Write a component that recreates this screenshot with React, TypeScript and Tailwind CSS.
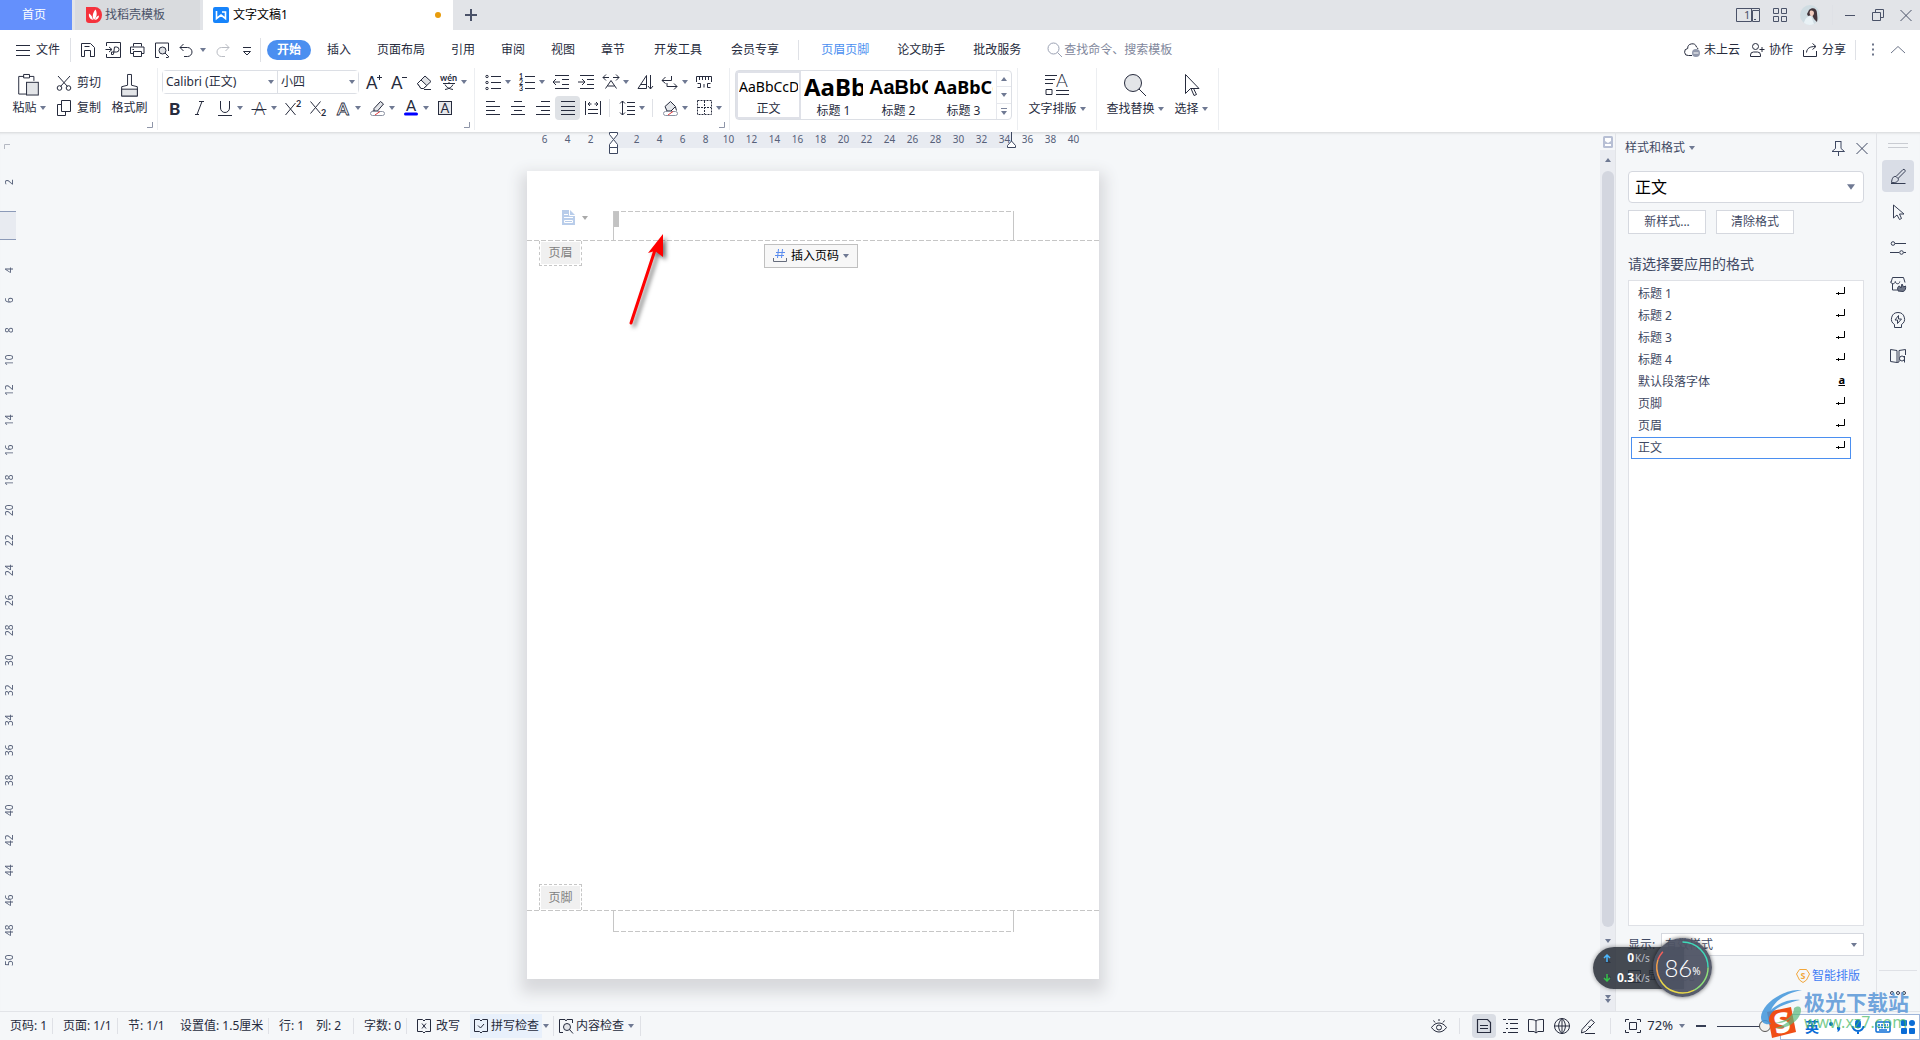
import { useState, type ReactNode } from 'react';
import clsx from 'clsx';

/* ---------- icons ---------- */

const ICONS: Record<string, ReactNode> = {
  save: <path d="M1.5 14.5v-13h9l4 4v9h-4.5M1.5 14.5h3M4.5 14.5v-6h6v6M4.5 4.5h5" />,
  pdf: <path d="M1.5 4V.5h14v15h-14V12M.5 7.5h6M4 5l3 2.5L4 10M8.5 12l1-7h2a2 2 0 010 5H6.5v2.5h2" />,
  print: <path d="M4.5 4.5v-3h8v3M4 11.5H1.5v-6.5h13.5v6.5H12.5M4.5 9.5h8v5h-8zM3.5 7.5h1.5" />,
  preview: (
    <>
      <path d="M5 15.5H1.5v-14.5h13v8M12 15.5h2.5" />
      <circle cx="8.5" cy="8.5" r="3.5" fill="#dfe1e5" />
      <path d="M11 11l4 4" />
    </>
  ),
  undo: <path d="M5.5 2l-3.5 3.5 3.5 3.5M2 5.5h7.5a4.5 4.5 0 010 9H6" />,
  redo: <path d="M10.5 2L14 5.5 10.5 9M14 5.5H6.5a4.5 4.5 0 000 9H10" />,
  more: <path d="M4 5.5h8M4.5 9.5h7L8 13z" />,
  menu: <path d="M1 3.5h14M1 8.5h14M1 13.5h14" />,
  search: <path d="M6.5 1a5.5 5.5 0 100 11 5.5 5.5 0 000-11zM10.5 10.5L15 15" />,
  cloud: (
    <>
      <path d="M8 13.5H4.5a3.5 3.5 0 01-.8-7A4.5 4.5 0 0112.500 5a4 4 0 011.500 2" />
      <circle cx="12" cy="11" r="4" fill="#9299ac" stroke="none" />
      <path d="M9.5 11h5" stroke="#fff" />
    </>
  ),
  collab: <path d="M6.5 1.5a3 3 0 100 6 3 3 0 000-6zM1.5 14.5v-1.5a3 3 0 013-3h4a3 3 0 013 3v1.5zM10.5 7.5h5M13 5v5" />,
  share: <path d="M1.5 8v6.5h13V9M4.5 10.5C5 6 8 4.5 13.5 4.5M10.5 1.5l3.5 3-3.5 3" />,
  dots: <path d="M7 2.500h2M7 7.500h2M7 12.500h2" strokeWidth="2" />,
  up: <path d="M1 11l7-6.5 7 6.5" />,
  cut: (
    <>
      <path d="M2 1l9.5 10.5M14 1L4.5 11.5" />
      <circle cx="3.5" cy="13" r="2.3" />
      <circle cx="12.5" cy="13" r="2.3" />
    </>
  ),
  copy: <path d="M5.5.5h9v11h-9zM5 4.5H1.5v11h8v-3.5" />,
  grow: (
    <>
      <text x="0" y="15" fontSize="17" fill="currentColor" stroke="none">A</text>
      <path d="M11 3.5h5M13.5 1v5" />
    </>
  ),
  shrink: (
    <>
      <text x="0" y="15" fontSize="17" fill="currentColor" stroke="none">A</text>
      <path d="M11 3.5h5" />
    </>
  ),
  eraser: (
    <>
      <path d="M1.5 9.5l7.5-7.5 6 5.5-7.5 7H5z" fill="#dfe1e5" />
      <path d="M1.5 9.5L5 6l5.8 5.5-3.3 3H5z" fill="#fff" />
      <path d="M8 15.5h7" />
    </>
  ),
  pinyin: (
    <>
      <text x="-1" y="7" fontSize="9" fontWeight="700" fill="currentColor" stroke="none">wén</text>
      <path d="M2 9.500h12M8 8v1.500M4 10.500c1 2.500 4 4.500 8 5M12 10.500c-1 2.500-4 4.500-8 5" />
    </>
  ),
  bold: <text x="2" y="14.5" fontSize="17" fontWeight="900" fill="currentColor" stroke="none">B</text>,
  italic: <path d="M7 1.5h5M3 14.5h4M10 1.5l-5 13" />,
  underline: <path d="M3.5 1v7a4.5 4.5 0 009 0V1M1 15.5h14" />,
  strike: (
    <>
      <text x="3" y="14.5" fontSize="17" fontWeight="300" fill="currentColor" stroke="none">A</text>
      <path d="M.5 9.5h15" />
    </>
  ),
  sup: (
    <>
      <path d="M.5 3l10 12M10.5 3l-10 12" />
      <text x="11" y="7" fontSize="9" fontWeight="700" fill="currentColor" stroke="none">2</text>
    </>
  ),
  sub: (
    <>
      <path d="M.5 1.5l10 12M10.5 1.5l-10 12" />
      <text x="11" y="16" fontSize="9" fontWeight="700" fill="currentColor" stroke="none">2</text>
    </>
  ),
  effect: (
    <text x="2" y="14.5" fontSize="17" fontWeight="700" fill="#fff" stroke="currentColor" strokeWidth=".8">A</text>
  ),
  highlight: (
    <>
      <path d="M5 8.5l6.5-7 3 2.5-6 7H5zM4.5 10.5l-2 1.5" fill="#e3e5e9" />
      <rect x="1.5" y="11.5" width="14" height="4" rx="2" fill="#fff" stroke="#8d93a3" />
      <path d="M6 15l5-3.5" stroke="#e33b3b" />
    </>
  ),
  fontColor: (
    <>
      <text x="3" y="11" fontSize="15" fill="currentColor" stroke="none">A</text>
      <rect x="1" y="12.5" width="14" height="3" rx="1.5" fill="#0000ff" stroke="none" />
    </>
  ),
  charBox: (
    <>
      <rect x="1.5" y="1.5" width="13" height="13" fill="#e8e9ec" />
      <text x="3.5" y="12.5" fontSize="13" fill="currentColor" stroke="none">A</text>
    </>
  ),
  bullets: (
    <>
      <path d="M6 2.5h10M6 8.5h10M6 14.5h10" />
      <circle cx="2" cy="2.5" r="1.2" />
      <circle cx="2" cy="8.5" r="1.2" />
      <circle cx="2" cy="14.5" r="1.2" />
    </>
  ),
  numbers: (
    <>
      <path d="M6 2.5h10M6 8.5h10M6 14.5h10" />
      <g fontSize="7" fontWeight="700" fill="currentColor" stroke="none">
        <text x="0" y="5">1</text>
        <text x="0" y="11">2</text>
        <text x="0" y="17">3</text>
      </g>
    </>
  ),
  outdent: <path d="M2 1.5h14M9 5.5h7M9 10.5h7M2 14.5h14M0 8h7M3 5L0 8l3 3" />,
  indent: <path d="M2 1.5h14M9 5.5h7M9 10.5h7M2 14.5h14M0 8h7M4 5l3 3-3 3" />,
  spread: <path d="M2.5 14.5L8 6.5l5.5 8M4.5 12h7M0 3.5h6M10 3.5h6M3 .5L0 3.5l3 3M13 .5l3 3-3 3" />,
  sort: <path d="M1 14.5L9.5 1.5v13zM4 10.5h5M13.5 1v14M11 12l2.500 3 2.500-3" />,
  wrap: <path d="M9.5 2v4.5H0M3.5 3L0 6.5l3.5 3M5 9v3.5h10M12 9.5l3 3-3 3" />,
  tabs: <path d="M.5 7.500V2.500h15v5M3.500 3v3M6.500 3v3M9.500 3v3M12.500 3v3M0 7.500h1M15 7.500h1M1.500 13.500h3v-4h-3M14.500 13.500h-3v-4h3M8 10v3.500" />,
  alignLeft: <path d="M1 1.5h9M1 6.5h14M1 10.5h9M1 14.5h14" />,
  alignCenter: <path d="M4 1.5h8M1 6.5h14M4 10.5h8M1 14.5h14" />,
  alignRight: <path d="M6 1.5h9M1 6.5h14M6 10.5h9M1 14.5h14" />,
  justify: <path d="M1 1.5h14M1 6.5h14M1 10.5h14M1 14.5h14" />,
  distribute: <path d="M.5 1v14M15.5 1v14M3 9.5h10M3 13.5h10M3 4h3.5M9.5 4H13M5 2L3 4l2 2M11 2l2 2-2 2" />,
  lineSpacing: <path d="M3.5 1v14M1 3.5L3.5 1 6 3.5M1 12.5L3.500 15 6 12.5M8 2.5h8M8 6.5h8M8 10.5h8M8 14.5h8" />,
  fill: (
    <>
      <path d="M3 6.5L8.5 1.5l5 5-4.5 4.5H5z" fill="#e3e5e9" />
      <path d="M13.5 7l1 3.5" />
      <rect x="1.5" y="11.5" width="14" height="4" rx="2" fill="#fff" stroke="#8d93a3" />
      <path d="M6 15l5-3.5" stroke="#e33b3b" />
    </>
  ),
  border: <path d="M1.5.5h14v14h-14zM8.5 1v13M2 7.5h13" strokeDasharray="2 1" />,
  insertMode: <path d="M6.5 1.5h-5v12h5L8 15l1.5-1.5h5v-12h-5L8 3zM6 5.500l4 5M10 5.500l-4 5" />,
  spell: <path d="M6.5 1.5h-5v12h5L8 15l1.5-1.5h5v-12h-5L8 3zM5 7.5l2.5 2.5L11 6" />,
  check: (
    <>
      <path d="M5 14.5H1.5v-13H7L8 3l1-1.500h5.5V5" />
      <circle cx="9" cy="9" r="3.5" fill="#e3e5e9" />
      <path d="M11.5 11.5l3.5 4" />
    </>
  ),
  eye: (
    <>
      <path d="M.5 9.5c4-6 11-6 15 0-4 6-11 6-15 0zM8 1v2M2.5 2.5L4 4.5M13.5 2.5L12 4.5" />
      <circle cx="8" cy="9.5" r="2.5" />
    </>
  ),
  pageView: <path d="M1.500 1.500h10l3 3v10h-13zM4 7.500h8M4 10.500h8" strokeWidth="1.200" />,
  outline: <path d="M1 1.5h3M6 1.5h10M4 5.5h2M8 5.5h8M4 10.5h2M8 10.5h8M1 14.5h3M6 14.5h10" />,
  book: <path d="M8 3C6.5 1.5 4 1.5.5 1.5v12H6l2 1.5 2-1.5h5.5v-12C12 1.5 9.5 1.5 8 3zM8 3v12" />,
  globe: <path d="M8 .5a7.500 7.500 0 100 15 7.500 7.500 0 000-15zM8 .5c-4.500 4-4.500 11 0 15M8 .5c4.500 4 4.500 11 0 15M.5 8h15M8 .5v15" />,
  pen: <path d="M2 11.5L11 1.5l3.500 3L5.500 13.500 1.500 15zM8.500 8l2 2M5 15.500h10" />,
  fit: <path d="M.5 4V1.500h3.500M12 1.500h3.500V4M15.500 12v2.500H12M4 14.500H.5V12M4.500 4.500h7v7h-7z" />,
  brush: <path d="M1 15.5h14.500M6 8.500l7-7c1.500-.5 2.500.5 2 2l-7 7zM6 8.500c-3-.5-4 2-4.500 6 4 .5 7-.5 7-4" />,
  pointer: <path d="M3.5 1v13l3.500-3 2.500 4.500 2-1L9.500 10H14z" />,
  sliders: (
    <>
      <path d="M5 3.5h11M0 12.5h9M13.5 12.5H16" />
      <circle cx="3" cy="3.5" r="1.8" />
      <circle cx="11.5" cy="12.5" r="1.8" />
    </>
  ),
  shape: (
    <>
      <path d="M2.5 7.5v6.5H7M1 6.5l1.500-5h11l1.500 5M.8 5.500c0 3 4.200 3 4.500 0 .5 3 4.200 3 4.500 0" />
      <path d="M8 15c-1-3 0-5 1.500-5l1.500 2 1-4 1.500 3 2-1c.5 2 0 5-2.500 5.500z" fill="#717889" />
    </>
  ),
  bulb: <path d="M8 .5a6.500 6.500 0 00-3.500 12v3h7v-3A6.500 6.500 0 008 .5zM8.500 3.500L5 8h2.500v3.500L11.500 7H8.500z" />,
  reader: (
    <>
      <path d="M9 14l-2 .5L.5 13.500v-12L7 2.500V14M9 14V2.500l6.500-1V7" />
      <circle cx="12" cy="10.500" r="2.500" />
      <path d="M14.500 8v6.500" />
    </>
  ),
  pin: <path d="M5 1.500h6.500M5.500 2v6.500L2 11.500h12.500L11 8.500V2M8.500 12v4" />,
  close: <path d="M2.5 3l11 11M13.5 3l-11 11" />,
  minimize: <path d="M3 8.5h10" />,
  restore: <path d="M2.5 5.5h8v8h-8zM5.5 5V2.5h8v8H11" />,
  grid: <path d="M1.5 1.5h5v5h-5zM9.500 1.500h5v5h-5zM1.500 9.500h5v5h-5zM9.500 9.500h5v5h-5z" />,
  plus: <path d="M2 8h12M8 2v12" strokeWidth="2" />,
};

function Icon({ name, className }: { name: string; className?: string }) {
  return (
    <svg
      viewBox="0 0 16 16"
      className={clsx("size-4 shrink-0 overflow-visible font-['Lato']", className)}
      fill="none"
      stroke="currentColor"
      aria-hidden="true"
    >
      {ICONS[name]}
    </svg>
  );
}

function Caret({ className, up }: { className?: string; up?: boolean }) {
  return (
    <svg viewBox="0 0 6 4" className={clsx('h-1 w-1.5 shrink-0 text-[#6f7993]', className)} aria-hidden="true">
      <path d={up ? 'M0 4L3 0l3 4z' : 'M0 0h6L3 4z'} fill="currentColor" />
    </svg>
  );
}

function Tool({ icon, label, caret, active }: { icon: string; label: string; caret?: boolean; active?: boolean }) {
  return (
    <button
      type="button"
      aria-label={label}
      className={clsx('flex h-6 shrink-0 items-center', caret ? 'w-[34px]' : 'w-[25px]', active && 'rounded-sm bg-[#dfe2e6]')}
    >
      <span className="flex w-[25px] justify-center">
        <Icon name={icon} />
      </span>
      {caret && <Caret />}
    </button>
  );
}

function Divider({ className }: { className?: string }) {
  return <span className={clsx('w-px shrink-0 bg-[#dfe1e6]', className)} />;
}

function Launcher() {
  return (
    <div className="flex justify-end px-1">
      <svg viewBox="0 0 6 6" className="size-1.5" fill="none" stroke="#8e95a8" aria-hidden="true">
        <path d="M5.500 0v5.500H0" />
      </svg>
    </div>
  );
}

/* ---------- title bar ---------- */

function TitleBar() {
  return (
    <header className="flex h-[30px] items-stretch bg-[#e2e4e8] text-[#4a5268]">
      <button type="button" className="w-[72px] bg-[#6490fc] pr-1 text-white">首页</button>
      <button type="button" className="ml-[3px] flex w-[125px] items-center gap-[3px] bg-[#d9dbde] pl-[11px]">
        <svg viewBox="0 0 16 16" className="size-4" aria-hidden="true">
          <path d="M0 0h9a7 8 0 010 16H3a3 3 0 01-3-3z" fill="#f5323c" />
          <path d="M8 13C6 10 6.500 6 9.500 2.500 11.500 6 11 10 8 13zM7 13C3.500 12 2.500 9 3 6.500 5.500 8 6.500 10 7 13zM9 13c.5-2.500 2-4 4-4.500 0 2.500-1.500 4-4 4.500z" fill="#fff" />
        </svg>
        找稻壳模板
      </button>
      <div className="ml-[3px] flex w-[250px] items-center gap-1 bg-white pr-3 pl-[10px] text-black">
        <svg viewBox="0 0 16 16" className="size-4" aria-hidden="true">
          <rect width="16" height="16" rx="2" fill="#1784fb" />
          <path d="M3.500 4v7.500L8 8l4.500 3.500V5H9" fill="none" stroke="#fff" strokeWidth="1.600" />
        </svg>
        <span className="flex-1">文字文稿1</span>
        <span className="size-1.5 rounded-full bg-[#e89c0c]" />
      </div>
      <button type="button" aria-label="新建" className="w-9 pl-[10px]">
        <Icon name="plus" />
      </button>
      <div className="flex-1" />
      <div className="flex items-center gap-3 pr-1.5">
        <svg viewBox="0 0 24 14" className="h-3.5 w-6" fill="none" stroke="currentColor" aria-hidden="true">
          <path d="M.5.5h15v13H.5zM16.500 13.500v-11h7v11zM15 .5h8.500v2M18 11.500h2" />
          <text x="8" y="11" fontSize="11" fill="currentColor" stroke="none">1</text>
        </svg>
        <Icon name="grid" />
        <svg viewBox="0 0 20 20" className="size-5" aria-hidden="true">
          <circle cx="10" cy="10" r="10" fill="#cfdce2" />
          <path d="M9 5c3-3 8-2 8 3 0 3 1 5 0 9l-3-3-2-4-4 1-1-2z" fill="#41343a" />
          <path d="M10 6c2-1 4 0 4 2s-2 4-3 3-2-3-1-5z" fill="#f0cdbf" />
          <path d="M4 18c1-5 4-7 7-7l3 8a10 10 0 01-10-1z" fill="#e9f2f6" />
        </svg>
        <Divider className="-mr-[3px] h-5 bg-[#c8cad0]" />
        <button type="button" aria-label="最小化"><Icon name="minimize" /></button>
        <button type="button" aria-label="还原"><Icon name="restore" /></button>
        <button type="button" aria-label="关闭"><Icon name="close" /></button>
      </div>
    </header>
  );
}

/* ---------- menu row ---------- */

function MenuRow() {
  return (
    <nav className="flex h-[38px] items-center bg-white pt-px text-[#262b3d]">
      <button type="button" className="flex w-[70px] items-center gap-[5px] pl-[15px]">
        <Icon name="menu" />
        文件
      </button>
      <Divider className="h-6" />
      <div className="flex w-[189px] items-center justify-between pr-[5px] pl-[9px]">
        <button type="button" aria-label="保存"><Icon name="save" /></button>
        <button type="button" aria-label="输出为PDF"><Icon name="pdf" /></button>
        <button type="button" aria-label="打印"><Icon name="print" /></button>
        <button type="button" aria-label="打印预览"><Icon name="preview" /></button>
        <button type="button" aria-label="撤销" className="flex items-center gap-1.5">
          <Icon name="undo" />
          <Caret />
        </button>
        <button type="button" aria-label="恢复" className="text-[#b9bcc3]"><Icon name="redo" /></button>
        <button type="button" aria-label="更多"><Icon name="more" /></button>
      </div>
      <Divider className="h-6" />
      <button type="button" className="mr-4 ml-1.5 h-5 w-11 rounded-full bg-[#4b8ff0] font-bold text-white">开始</button>
      <div className="flex gap-[26px]">
        {['插入', '页面布局', '引用', '审阅', '视图', '章节'].map((t) => (
          <button key={t} type="button">{t}</button>
        ))}
      </div>
      <div className="ml-[29px] flex gap-[29px]">
        <button type="button">开发工具</button>
        <button type="button">会员专享</button>
      </div>
      <Divider className="mr-[22px] ml-[19px] h-5" />
      <div className="flex gap-7">
        <button type="button" className="text-[#4b8ff0]">页眉页脚</button>
        <button type="button">论文助手</button>
        <button type="button">批改服务</button>
      </div>
      <label className="ml-[26px] flex flex-1 items-center gap-px text-[#9aa1b3]">
        <Icon name="search" />
        <input aria-label="查找" placeholder="查找命令、搜索模板" className="w-40 outline-none placeholder:text-[#7f879c]" />
      </label>
      <div className="flex items-center gap-[9px] pr-[14px]">
        <button type="button" className="flex items-center gap-1"><Icon name="cloud" />未上云</button>
        <button type="button" className="flex items-center gap-1"><Icon name="collab" />协作</button>
        <button type="button" className="flex items-center gap-1"><Icon name="share" />分享</button>
        <Divider className="h-5" />
        <button type="button" aria-label="更多选项" className="text-[#6d7589]"><Icon name="dots" /></button>
        <button type="button" aria-label="收起功能区" className="text-[#6d7589]"><Icon name="up" /></button>
      </div>
    </nav>
  );
}

/* ---------- ribbon ---------- */

function Group({ className, children }: { className?: string; children: ReactNode }) {
  return (
    <div className={clsx('flex h-[62px] shrink-0 flex-col gap-0.5 border-r border-[#eceef1] pt-0.5', className)}>{children}</div>
  );
}

function BigTool({ label, caret, className, children }: { label: string; caret?: boolean; className?: string; children: ReactNode }) {
  return (
    <button type="button" className={clsx('flex flex-col items-center', className)}>
      <svg viewBox="0 0 24 24" className="mt-[3px] size-6" fill="none" stroke="currentColor" aria-hidden="true">
        {children}
      </svg>
      <span className="flex h-6 items-center gap-[3px]">
        {label}
        {caret && <Caret />}
      </span>
    </button>
  );
}

function Dropdown({ label, options, className, caretClass }: { label: string; options: string[]; className?: string; caretClass?: string }) {
  return (
    <div className={clsx('grid items-center bg-white', className)}>
      <select aria-label={label} className="col-start-1 row-start-1 h-full w-full appearance-none bg-transparent pl-[3px] outline-none">
        {options.map((o) => (
          <option key={o}>{o}</option>
        ))}
      </select>
      <Caret className={clsx('pointer-events-none col-start-1 row-start-1 justify-self-end', caretClass)} />
    </div>
  );
}

const STYLE_CELLS = [
  { name: '正文', sample: 'AaBbCcD', font: 'text-sm', active: true },
  { name: '标题 1', sample: 'AaBbC', font: 'text-2xl font-bold' },
  { name: '标题 2', sample: 'AaBbC', font: "text-xl font-bold font-['Liberation_Sans']" },
  { name: '标题 3', sample: 'AaBbCc', font: 'text-lg font-bold' },
];

function Ribbon() {
  return (
    <section className="flex h-16 overflow-hidden bg-white text-[#262b3d]">
      <Group className="w-[158px]">
        <div className="flex h-[50px] gap-1.5 pl-2">
          <BigTool label="粘贴" caret className="w-[42px]">
            <path d="M7 3.500H1.500v18H9M17 8V3.500h-5M6.500 1.500h6v3.500h-6z" />
            <rect x="9.500" y="9.500" width="12" height="13" fill="#e3e5e8" />
          </BigTool>
          <div className="flex w-[46px] flex-col gap-0.5 pt-px">
            <button type="button" className="flex h-6 items-center gap-[5px]"><Icon name="cut" />剪切</button>
            <button type="button" className="flex h-6 items-center gap-[5px]"><Icon name="copy" />复制</button>
          </div>
          <BigTool label="格式刷" className="w-[43px]">
            <path d="M3.500 23.500v-9.500l6-1.500V1.500h4v11l6 1.500v9.500z" />
            <rect x="3.500" y="16.500" width="16" height="7" fill="#e3e5e8" />
          </BigTool>
        </div>
        <Launcher />
      </Group>

      <Group className="w-[317px] pl-1">
        <div className="flex h-6">
          <div className="mr-0.5 flex w-[197px] rounded-sm border border-[#dcdfe5]">
            <Dropdown label="字体" options={['Calibri (正文)', '宋体']} className="w-[115px] border-r border-[#dcdfe5]" caretClass="mr-[3px]" />
            <Dropdown label="字号" options={['小四', '五号']} className="flex-1" caretClass="mr-[3px]" />
          </div>
          <Tool icon="grow" label="增大字号" />
          <Tool icon="shrink" label="减小字号" />
          <Tool icon="eraser" label="清除格式" />
          <Tool icon="pinyin" label="拼音指南" caret />
        </div>
        <div className="flex h-6">
          <Tool icon="bold" label="加粗" />
          <Tool icon="italic" label="倾斜" />
          <Tool icon="underline" label="下划线" caret />
          <Tool icon="strike" label="删除线" caret />
          <Tool icon="sup" label="上标" />
          <Tool icon="sub" label="下标" />
          <Tool icon="effect" label="文字效果" caret />
          <Tool icon="highlight" label="突出显示" caret />
          <Tool icon="fontColor" label="字体颜色" caret />
          <Tool icon="charBox" label="字符底纹" />
        </div>
        <Launcher />
      </Group>

      <Group className="w-[255px] pl-[5px]">
        <div className="flex h-6">
          <Tool icon="bullets" label="项目符号" caret />
          <Tool icon="numbers" label="编号" caret />
          <Tool icon="outdent" label="减少缩进" />
          <Tool icon="indent" label="增加缩进" />
          <Tool icon="spread" label="中文版式" caret />
          <Tool icon="sort" label="排序" />
          <Tool icon="wrap" label="显示标记" caret />
          <Tool icon="tabs" label="制表位" />
        </div>
        <div className="flex h-6 items-center">
          <Tool icon="alignLeft" label="左对齐" />
          <Tool icon="alignCenter" label="居中" />
          <Tool icon="alignRight" label="右对齐" />
          <Tool icon="justify" label="两端对齐" active />
          <Tool icon="distribute" label="分散对齐" />
          <Divider className="mx-1 h-[18px]" />
          <Tool icon="lineSpacing" label="行距" caret />
          <Divider className="mx-1 h-[18px]" />
          <Tool icon="fill" label="底纹颜色" caret />
          <Tool icon="border" label="边框" caret />
        </div>
        <Launcher />
      </Group>

      <Group className="w-[288px] px-[5px]">
        <div className="flex h-[50px] rounded-sm border border-[#dcdfe5]">
          {STYLE_CELLS.map((s) => (
            <button
              key={s.name}
              type="button"
              className={clsx('flex w-[65px] flex-col overflow-hidden', s.active ? 'border-2 border-[#dfe1e8] px-px' : 'px-[3px]')}
            >
              <span className={clsx('flex h-8 min-h-0 w-full flex-1 items-center overflow-hidden whitespace-nowrap text-black', s.font)}>{s.sample}</span>
              <span className="w-full text-center leading-4">{s.name}</span>
            </button>
          ))}
          <div className="flex flex-1 flex-col divide-y divide-[#e6e8ed] border-l border-[#e6e8ed]">
            <button type="button" aria-label="上一行" className="flex flex-1 items-center justify-center"><Caret up /></button>
            <button type="button" aria-label="下一行" className="flex flex-1 items-center justify-center"><Caret /></button>
            <button type="button" aria-label="展开" className="flex flex-1 flex-col items-center justify-center gap-0.5">
              <span className="h-px w-1.5 bg-[#7a839b]" />
              <Caret />
            </button>
          </div>
        </div>
      </Group>

      <Group className="w-[79px] items-center">
        <BigTool label="文字排版" caret>
          <path d="M0 2.500h12M0 6.500h10M0 10.500h8M1 16.500h6v5H1zM11 17.500h13M11 21.500h13" />
          <text x="11" y="14" fontSize="18" fontWeight="300" fill="currentColor" stroke="none" className="font-['Lato']">A</text>
        </BigTool>
      </Group>

      <Group className="w-[122px]">
        <div className="flex pl-1">
          <BigTool label="查找替换" caret className="w-[68px]">
            <circle cx="10" cy="10" r="8.500" fill="#e3e5e8" />
            <path d="M16 16l7 7" />
          </BigTool>
          <BigTool label="选择" caret className="w-11">
            <path d="M6.500 1.500v19l5-5h8.500zM12 15.500l3 7 2.500-1-3-6" />
          </BigTool>
        </div>
      </Group>
    </section>
  );
}

/* ---------- workspace ---------- */

const H_LEFT = [6, 4, 2];
const H_MAIN = Array.from({ length: 17 }, (_, i) => (i + 1) * 2);
const H_RIGHT = [36, 38, 40];
const V_MARKS = Array.from({ length: 24 }, (_, i) => i * 2 + 4);

function VerticalRuler() {
  const mark = 'flex items-center justify-center [writing-mode:vertical-rl] rotate-180 pr-px';
  return (
    <div className="flex w-[26px] shrink-0 flex-col text-[10px] leading-3 text-[#566079]">
      <svg viewBox="0 0 6 5" className="mt-3 ml-1 h-[5px] w-1.5" fill="none" stroke="#b4b8c2" aria-hidden="true">
        <path d="M.5 5V.5H6" />
      </svg>
      <div className={clsx(mark, 'mt-[18px] h-[30px] w-4')}>2</div>
      <div className="mt-[14px] mb-[15px] h-[29px] w-4 border-y border-[#8c9ab8] bg-[#e8ebf1]" />
      {V_MARKS.map((n) => (
        <div key={n} className={clsx(mark, 'h-[30px] w-4')}>{n}</div>
      ))}
    </div>
  );
}

function HorizontalRuler() {
  const mark = 'w-[23px] shrink-0 text-center';
  return (
    <div className="relative mx-auto flex h-4 w-[572px] pl-1.5 text-[10px] leading-[15px] text-[#566079]">
      {H_LEFT.map((n) => (
        <span key={n} className={mark}>{n}</span>
      ))}
      <div className="ml-3 flex w-[398px] bg-[#e8ebf1] pl-[11px]">
        {H_MAIN.map((n) => (
          <span key={n} className={mark}>{n}</span>
        ))}
      </div>
      <div className="ml-1 flex">
        {H_RIGHT.map((n) => (
          <span key={n} className={mark}>{n}</span>
        ))}
      </div>
      <svg viewBox="0 0 10 22" className="absolute top-0 left-[82px] h-[22px] w-2.5" fill="#fff" stroke="#3d4760" aria-hidden="true">
        <path d="M.5.5h8v2l-4 5-4-5zM.5 15.500v-3l4-5 4 5v3zM.5 15.500h8v6h-8z" />
      </svg>
      <svg viewBox="0 0 10 16" className="absolute top-0 left-[480px] h-4 w-2.5" fill="#fff" stroke="#3d4760" aria-hidden="true">
        <path d="M4.500 0v9M.5 15.500v-2l4-4.500 4 4.500v2z" />
      </svg>
    </div>
  );
}

const DASH_X = 'h-px shrink-0 bg-[repeating-linear-gradient(90deg,#c6c6c6_0_5px,transparent_5px_7px)]';

function DocumentPage() {
  return (
    <article className="relative mx-auto mt-[23px] mb-8 flex min-h-[808px] w-[572px] flex-1 flex-col bg-white shadow-[0_8px_14px_6px_#d8d9dc]">
      <div className="flex h-[69px] items-end">
        <button type="button" aria-label="页眉选项" className="flex h-[69px] w-[86px] items-center gap-[7px] pt-6 pl-[35px]">
          <svg viewBox="0 0 13 15" className="h-[15px] w-[13px]" aria-hidden="true">
            <path d="M0 0h8l5 5v10H0z" fill="#b9cdea" />
            <path d="M7.500 0v5.500H13M2 4.500h4M2 7.500h9M2.500 10.500h8v2h-8z" fill="none" stroke="#fff" />
          </svg>
          <Caret className="text-[#a9a9a9]" />
        </button>
        <div className="flex h-[29px] w-[401px] flex-col border-x border-[#c6c6c6]">
          <div className={DASH_X} />
          <div className="h-[15px] w-[5px] bg-[#c3c3c3]" />
        </div>
      </div>
      <div className={DASH_X} />
      <div className="flex items-start pl-3">
        <div className="w-[43px] border border-t-0 border-dashed border-[#c6c6c6] p-px">
          <div className="bg-[#f0f0f0] text-center leading-[22px] text-[#808080]">页眉</div>
        </div>
        <button type="button" className="mt-[3px] ml-[182px] flex h-6 w-[94px] items-center justify-center gap-1 border border-[#c0c0c0] bg-[#f7f7f7] text-black">
          <svg viewBox="0 0 14 14" className="size-3.5" fill="none" aria-hidden="true">
            <path d="M5.500 0L4.500 9M9.500 0l-1 9M3 3.500h9M2 6.500h9" stroke="#5b8def" />
            <path d="M.5 9v3.500h13V9" stroke="#666d7d" />
          </svg>
          插入页码
          <Caret />
        </button>
      </div>
      <div className="flex-1" />
      <div className="ml-3 w-[43px] border border-b-0 border-dashed border-[#c6c6c6] p-px">
        <div className="bg-[#f0f0f0] text-center leading-[23px] text-[#808080]">页脚</div>
      </div>
      <div className={DASH_X} />
      <div className="mb-[47px] ml-[86px] flex h-[21px] w-[401px] flex-col justify-end border-x border-[#c6c6c6]">
        <div className={DASH_X} />
      </div>
      <svg viewBox="0 0 50 100" className="absolute top-[60px] left-[98px] h-[100px] w-[50px] drop-shadow-[3px_3px_2px_#0008]" aria-hidden="true">
        <path d="M6 92L30 19" stroke="#f00" strokeWidth="3" strokeLinecap="round" />
        <path d="M38 3L23 22l7-2 8 6z" fill="#f00" />
      </svg>
    </article>
  );
}

function ScrollColumn() {
  return (
    <div className="flex w-[15px] shrink-0 flex-col items-center text-[#8e97ad]">
      <svg viewBox="0 0 10 12" className="mt-1 h-3 w-2.5" aria-hidden="true">
        <rect width="10" height="12" rx="1.500" fill="#b7bfd4" />
        <path d="M2 2h6v3L5 7 2 5zM2 8h6v2H2z" fill="#fff" />
      </svg>
      <div className="mt-0.5 flex w-full flex-1 flex-col items-center bg-[#eaecf1]">
        <Caret up className="my-2" />
        <div className="mt-px w-3 flex-1 rounded-full bg-[#d3d6df]" />
        <Caret className="mt-3" />
        <Caret up className="mt-4" />
        <span className="mt-3 size-1.5 rounded-full border border-[#8e97ad]" />
        <Caret className="mt-[14px]" />
        <Caret className="mb-2" />
      </div>
    </div>
  );
}

/* ---------- style pane ---------- */

const STYLES = ['标题 1', '标题 2', '标题 3', '标题 4', '默认段落字体', '页脚', '页眉', '正文'];

function StylePane() {
  const [selected, setSelected] = useState('正文');
  return (
    <aside className="flex w-[262px] shrink-0 flex-col border-x border-[#e2e4e8] px-3 text-[#3f4963]">
      <div className="flex h-8 items-center gap-2">
        <button type="button" className="-ml-1 flex flex-1 items-center gap-1 pl-px">
          样式和格式
          <Caret />
        </button>
        <button type="button" aria-label="固定"><Icon name="pin" /></button>
        <button type="button" aria-label="关闭窗格" className="-mr-1.5"><Icon name="close" /></button>
      </div>
      <Dropdown label="当前样式" options={['正文', '标题 1']} className="mt-[7px] h-8 rounded-sm border border-[#d5d8df] pl-[3px] text-base text-black" caretClass="mr-2 h-1.5 w-2" />
      <div className="mt-[7px] flex gap-[10px]">
        <button type="button" className="h-6 w-[78px] border border-[#d5d8df] bg-white">新样式...</button>
        <button type="button" className="h-6 w-[78px] border border-[#d5d8df] bg-white">清除格式</button>
      </div>
      <h2 className="mt-5 mb-1.5 text-sm leading-5">请选择要应用的格式</h2>
      <ul className="flex flex-1 flex-col border border-[#dfe1e6] bg-white pt-0.5 pr-3 pl-0.5">
        {STYLES.map((s) => (
          <li key={s}>
            <button
              type="button"
              onClick={() => setSelected(s)}
              className={clsx('flex h-[22px] w-full items-center justify-between border pr-[5px] pl-1.5', s === selected ? 'border-[#4b8ff0]' : 'border-transparent')}
            >
              {s}
              {s === '默认段落字体' ? (
                <span className="pb-1 text-[11px] leading-3 font-bold text-black underline">a</span>
              ) : (
                <svg viewBox="0 0 9 9" className="mb-1.5 size-[9px]" fill="none" stroke="#000" aria-hidden="true">
                  <path d="M8.500 0v6.500H0M2.500 5v3M1.500 6v1" />
                </svg>
              )}
            </button>
          </li>
        ))}
      </ul>
      <div className="mt-[7px] flex items-center">
        <span className="w-[33px]">显示:</span>
        <Dropdown label="显示" options={['有效样式', '所有样式']} className="h-[23px] flex-1 border border-[#d5d8df]" caretClass="mr-1.5" />
      </div>
      <div className="mt-3 mb-[27px] flex items-center justify-between pr-1">
        <label className="flex items-center gap-1.5">
          <input type="checkbox" className="size-[13px] appearance-none border border-[#3f4963]" />
          显示预览
        </label>
        <button type="button" className="flex items-center gap-0.5 text-[#3f7cf4]">
          <svg viewBox="0 0 14 14" className="size-3.5" fill="none" stroke="#f2a63a" aria-hidden="true">
            <path d="M3.500.5h7l3 4.500-3 6L7 13.500 3.500 11l-3-6z" />
            <text x="7" y="10" fontSize="9" fontWeight="700" textAnchor="middle" fill="#f2a63a" stroke="none">S</text>
          </svg>
          智能排版
        </button>
      </div>
    </aside>
  );
}

function SideRail() {
  return (
    <div className="flex w-[43px] shrink-0 flex-col items-center gap-1 pr-0.5 text-[#363e54]">
      <div className="mt-[11px] mb-2 h-[5px] w-5 border-y border-[#c9ccd2]" />
      {[
        ['brush', '样式和格式'],
        ['pointer', '选择窗格'],
        ['sliders', '属性'],
        ['shape', '稻壳资源'],
        ['bulb', '帮助'],
        ['reader', '阅读'],
      ].map(([icon, label], i) => (
        <button key={icon} type="button" aria-label={label} className={clsx('flex size-8 items-center justify-center rounded-sm', i === 0 && 'bg-[#d9dde6]')}>
          <Icon name={icon} />
        </button>
      ))}
      <div className="flex-1" />
      <div className="h-px w-[38px] bg-[#dfe1e6]" />
      <div className="mt-4 mb-4 flex gap-0.5">
        {[0, 1, 2].map((n) => (
          <span key={n} className="size-1 rounded-full border border-[#363e54]" />
        ))}
      </div>
    </div>
  );
}

/* ---------- status bar ---------- */

function StatusBar() {
  return (
    <footer className="flex h-[29px] items-center border-t border-[#e2e4e8] text-[#262b3d]">
      <div className="flex h-5 items-center">
        <span className="w-[53px] border-r border-[#dfe1e6] pl-[10px]">页码: 1</span>
        <span className="w-[65px] border-r border-[#dfe1e6] pl-[10px]">页面: 1/1</span>
        <span className="w-[62px] pl-[10px]">节: 1/1</span>
        <span className="w-[89px] border-r border-[#dfe1e6]">设置值: 1.5厘米</span>
        <span className="w-[47px] pl-[10px]">行: 1</span>
        <span className="w-[38px] border-r border-[#dfe1e6]">列: 2</span>
        <span className="w-[53px] border-r border-[#dfe1e6] pl-[10px]">字数: 0</span>
      </div>
      <button type="button" className="flex w-[63px] items-center gap-1 pl-[9px]"><Icon name="insertMode" />改写</button>
      <button type="button" className="flex h-6 items-center gap-0.5 bg-[#e8f0fb] px-[3px]"><Icon name="spell" />拼写检查</button>
      <Caret className="ml-px mr-1" />
      <Divider className="h-5" />
      <button type="button" className="flex w-[86px] items-center gap-0.5 pl-1"><Icon name="check" />内容检查<Caret className="ml-0.5" /></button>
      <Divider className="h-5" />
      <div className="flex-1" />
      <button type="button" aria-label="护眼模式"><Icon name="eye" /></button>
      <Divider className="mx-3 h-4" />
      <div className="flex items-center gap-[2px]">
        {[
          ['pageView', '页面视图'],
          ['outline', '大纲'],
          ['book', '阅读版式'],
          ['globe', 'Web版式'],
          ['pen', '写作模式'],
        ].map(([icon, label], i) => (
          <button key={icon} type="button" aria-label={label} className={clsx('flex size-6 items-center justify-center rounded-sm', i === 0 && 'bg-[#d9dde4]')}>
            <Icon name={icon} />
          </button>
        ))}
      </div>
      <Divider className="mr-[14px] ml-[10px] h-4" />
      <button type="button" aria-label="最佳显示比例"><Icon name="fit" /></button>
      <button type="button" className="ml-1.5 flex items-center gap-1.5 text-[13px]">72%<Caret /></button>
      <button type="button" aria-label="缩小" className="mx-[11px] h-0.5 w-[10px] bg-[#363e54]" />
      <input
        type="range"
        aria-label="显示比例"
        defaultValue={50}
        className="mr-[107px] h-3 w-24 appearance-none bg-[linear-gradient(#363e54,#363e54)] bg-[length:100%_1px] bg-center bg-no-repeat [&::-webkit-slider-thumb]:size-3 [&::-webkit-slider-thumb]:appearance-none [&::-webkit-slider-thumb]:rounded-full [&::-webkit-slider-thumb]:border [&::-webkit-slider-thumb]:border-[#555] [&::-webkit-slider-thumb]:bg-[#f4f1ee]"
      />
    </footer>
  );
}

/* ---------- desktop overlays ---------- */

function SpeedBall() {
  return (
    <div className="absolute right-[208px] bottom-[43px] flex items-center">
      <div className="-mr-[31px] flex h-[42px] w-[91px] flex-col justify-center rounded-l-full bg-[#262b35]/85 pl-[10px] leading-5 font-bold text-white shadow-[0_0_4px_#0006]">
        {[
          ['0', 'text-[#4db8ff]'],
          ['0.3', 'text-[#35c24a] rotate-180'],
        ].map(([n, tone]) => (
          <div key={n} className="flex w-[47px] items-center">
            <svg viewBox="0 0 8 8" className={clsx('size-2 shrink-0', tone)} fill="none" stroke="currentColor" strokeWidth="1.500" aria-hidden="true">
              <path d="M4 8V1M1 4l3-3 3 3" />
            </svg>
            <span className="flex-1 text-right">{n}</span>
            <span className="w-4 pl-px text-[10px] font-normal text-[#b9bdc6]">K/s</span>
          </div>
        ))}
      </div>
      <div className="relative flex size-[59px] items-center justify-center rounded-full bg-[#4e5364]/95 shadow-[0_0_4px_#0009]">
        <svg viewBox="0 0 60 60" className="absolute inset-0" fill="none" strokeWidth="1.500" aria-hidden="true">
          <path d="M30 4a26 26 0 0126 26" stroke="#3fd9b8" />
          <path d="M56 30a26 26 0 01-14 23" stroke="#8fe07a" />
          <path d="M42 53A26 26 0 017 42" stroke="#e8d84a" />
          <path d="M7 42a26 26 0 01-2-20" stroke="#f5a04a" />
          <path d="M5 22a26 26 0 015-8" stroke="#f5605a" />
        </svg>
        <span className="font-['Lato'] text-2xl font-light text-white">86</span>
        <span className="pt-2 text-[10px] text-white">%</span>
      </div>
    </div>
  );
}

function InputBar() {
  return (
    <div className="absolute right-0 bottom-0 flex h-[26px] w-[140px] items-center justify-between border border-[#9fb6da] bg-white pr-1 pl-6 text-[#0a6cd6]">
      <svg viewBox="0 0 32 32" className="absolute bottom-0 -left-4 size-8" aria-hidden="true">
        <path d="M2 5l24-5 5 25-24 6z" fill="#f04e16" />
        <text x="17" y="26" fontSize="28" fontWeight="900" textAnchor="middle" fill="#fff" transform="rotate(-10 16 16)">S</text>
      </svg>
      <span className="text-sm font-bold">英</span>
      <svg viewBox="0 0 12 12" className="size-3" fill="currentColor" aria-hidden="true">
        <circle cx="2" cy="3" r="2" />
        <path d="M8 6h3c1 2-1 5-3 5 1-1 1-2 0-3z" />
      </svg>
      <svg viewBox="0 0 14 16" className="h-4 w-3.5" fill="currentColor" stroke="currentColor" aria-hidden="true">
        <rect x="4.500" y="1" width="5" height="8" rx="2.500" />
        <path d="M1.500 7a5.500 5 0 0011 0M7 12v3" fill="none" strokeWidth="2" />
      </svg>
      <svg viewBox="0 0 16 12" className="h-3 w-4" fill="none" stroke="currentColor" strokeWidth="1.500" aria-hidden="true">
        <rect x="1" y="1" width="14" height="10" rx="1" />
        <path d="M3 4h10M3 6.500h10" strokeDasharray="2 1" />
        <path d="M4 9h8" />
      </svg>
      <svg viewBox="0 0 14 14" className="size-3.5" fill="currentColor" aria-hidden="true">
        <rect width="6" height="6" rx="1" />
        <circle cx="11" cy="3" r="3" />
        <rect y="8" width="6" height="6" rx="1" />
        <rect x="8" y="8" width="6" height="6" rx="1" />
      </svg>
    </div>
  );
}

function Watermark() {
  return (
    <div className="pointer-events-none absolute right-[10px] bottom-0 flex h-[50px] items-start">
      <svg viewBox="0 0 44 44" className="h-11 w-11" aria-hidden="true">
        <path d="M42 0C22-1 2 14 1 27c0 6 4 8 10 7C5 28 12 16 40 10 28 9 17 14 11 20 16 9 28 3 42 0z" fill="#3f95dc" fillOpacity=".85" />
        <path d="M14 33c14-2 20-8 20-15 5-3 7-1 7 2 0 10-14 20-26 18 8-2 14-6 16-10-5 4-10 6-17 5z" fill="#58b87a" fillOpacity=".7" />
      </svg>
      <div className="flex w-[106px] flex-col">
        <span className="text-[21px] leading-6 font-bold whitespace-nowrap text-[#5f9ad8]/90">极光下载站</span>
        <span className="text-base leading-4 whitespace-nowrap text-[#3fb55f]/70">www.xz7.com</span>
      </div>
    </div>
  );
}

export default function App() {
  return (
    <div className="relative flex min-h-screen flex-col overflow-hidden bg-[#f5f7f9] font-['Noto_Sans','Noto_Sans_CJK_SC',sans-serif] text-xs">
      <TitleBar />
      <MenuRow />
      <Ribbon />
      <main className="flex flex-1 shadow-[inset_0_3px_3px_-2px_#0002]">
        <VerticalRuler />
        <div className="flex min-w-0 flex-1 flex-col overflow-hidden">
          <HorizontalRuler />
          <DocumentPage />
        </div>
        <ScrollColumn />
        <StylePane />
        <SideRail />
      </main>
      <StatusBar />
      <SpeedBall />
      <InputBar />
      <Watermark />
    </div>
  );
}
